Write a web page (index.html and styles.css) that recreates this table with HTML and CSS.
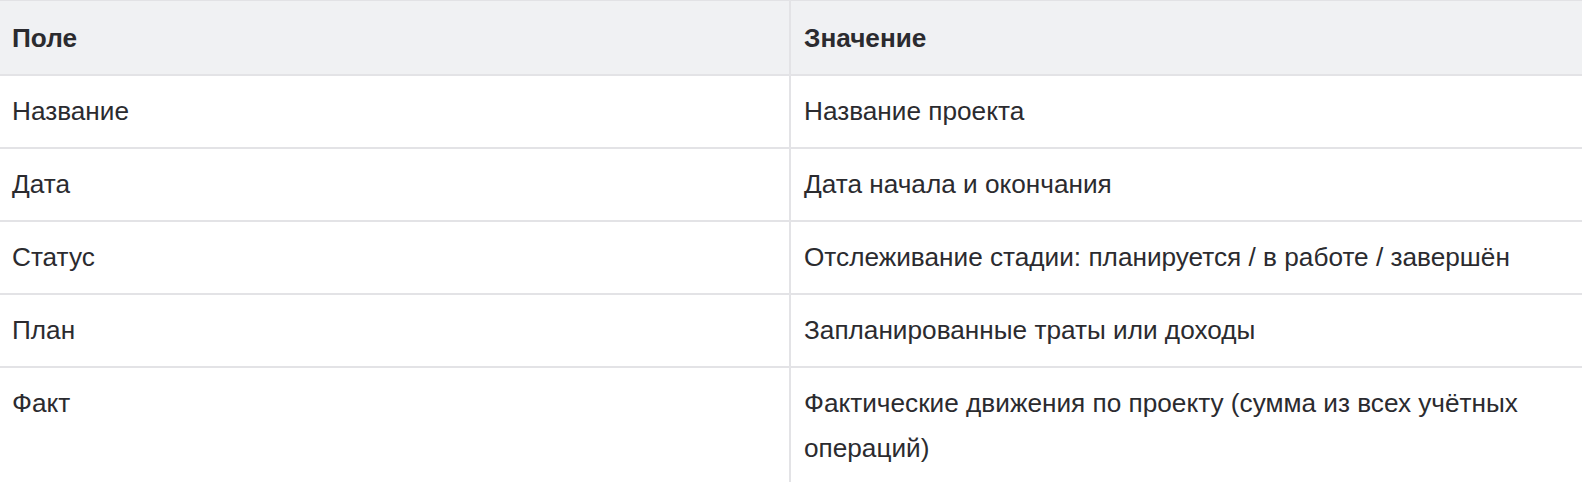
FILE: index.html
```html
<!DOCTYPE html>
<html lang="ru">
<head>
<meta charset="utf-8">
<title>Таблица</title>
<link rel="stylesheet" href="styles.css">
</head>
<body>
<table class="fields">
  <colgroup>
    <col class="col-field">
    <col class="col-value">
  </colgroup>
  <thead>
    <tr>
      <th class="cell cell-first">Поле</th>
      <th class="cell cell-second">Значение</th>
    </tr>
  </thead>
  <tbody>
    <tr>
      <td class="cell cell-first">Название</td>
      <td class="cell cell-second">Название проекта</td>
    </tr>
    <tr>
      <td class="cell cell-first">Дата</td>
      <td class="cell cell-second">Дата начала и окончания</td>
    </tr>
    <tr>
      <td class="cell cell-first">Статус</td>
      <td class="cell cell-second">Отслеживание стадии: планируется / в работе / завершён</td>
    </tr>
    <tr>
      <td class="cell cell-first">План</td>
      <td class="cell cell-second">Запланированные траты или доходы</td>
    </tr>
    <tr>
      <td class="cell cell-first">Факт</td>
      <td class="cell cell-second">Фактические движения по проекту (сумма из всех учётных операций)</td>
    </tr>
  </tbody>
</table>
</body>
</html>
```

FILE: styles.css
```css
html, body {
  margin: 0;
  padding: 0;
  background: #ffffff;
}

body {
  font-family: "Liberation Sans", Arial, sans-serif;
  color: #2b2b2f;
}

.fields {
  width: 1582px;
  border-collapse: collapse;
  table-layout: fixed;
  border-top: 1px solid #e2e2e5;
}

.col-field {
  width: 790px;
}

.cell {
  font-size: 26.2px;
  line-height: 45px;
  text-align: left;
  vertical-align: top;
  padding: 13px 12px 13px 13px;
  border-bottom: 2px solid #e3e3e6;
}

.cell-first {
  padding-left: 12px;
  border-right: 2px solid #e3e3e6;
}

.cell-second {
  padding-right: 60px;
}

thead .cell {
  font-weight: bold;
  background: #f0f1f3;
  padding-top: 15px;
  padding-bottom: 13px;
}
```
